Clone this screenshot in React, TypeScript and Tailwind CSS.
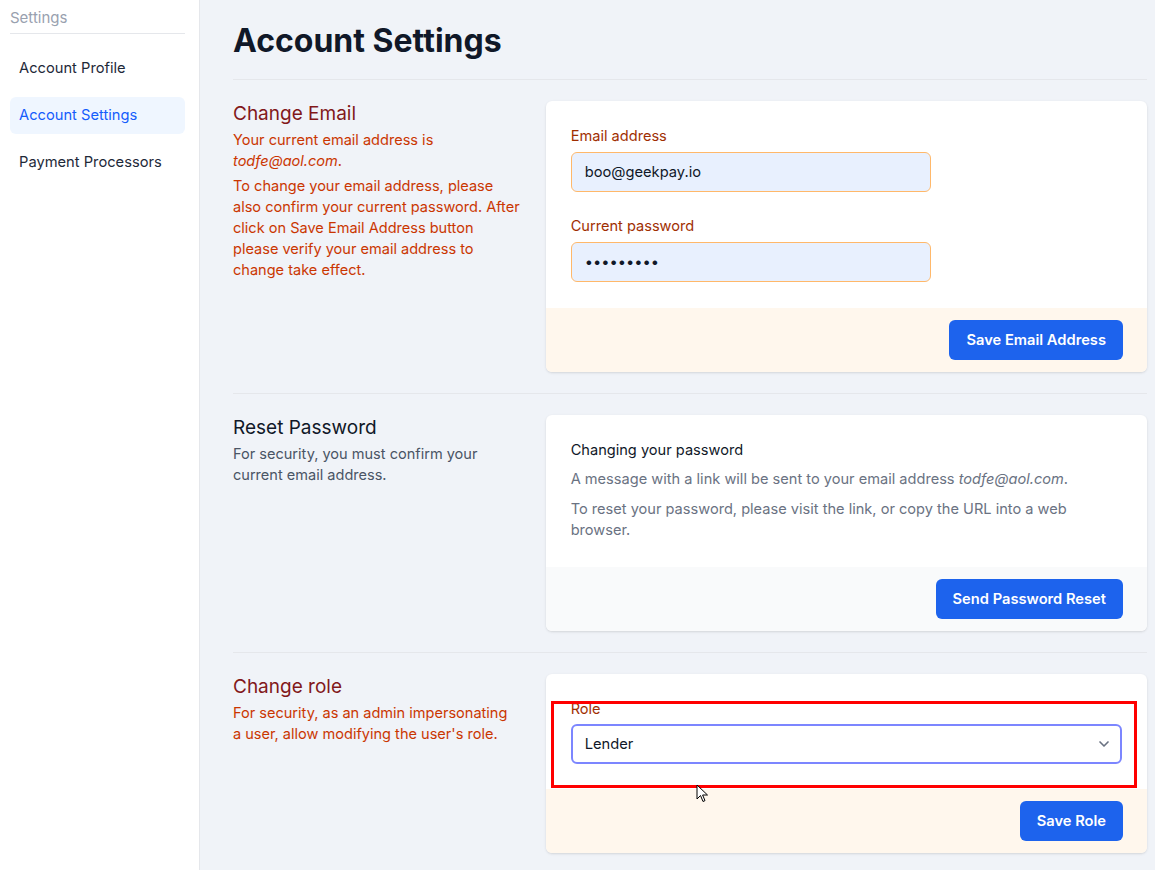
import React from 'react'
import { ChevronDown } from 'lucide-react'

// 侧边栏菜单
const NAV_ITEMS = [
  { label: 'Account Profile', active: false },
  { label: 'Account Settings', active: true },
  { label: 'Payment Processors', active: false },
]

const Sidebar: React.FC = () => (
  <aside className="w-[200px] shrink-0 bg-white border-r border-gray-200 px-[10px] pr-[14px]">
    <div className="pt-[8px] pb-[5px] border-b border-gray-200 text-[15px] leading-5 text-gray-400">Settings</div>
    <nav className="mt-[16px] flex flex-col gap-[10px]">
      {NAV_ITEMS.map((item) => (
        <a
          key={item.label}
          className={`flex h-[37px] items-center rounded-md px-[9px] text-[14.7px] ${
            item.active ? 'bg-blue-50 text-blue-600' : 'text-gray-800'
          }`}
        >
          {item.label}
        </a>
      ))}
    </nav>
  </aside>
)

const Field: React.FC<{ label: string; value: string; type?: string; className?: string }> = ({
  label,
  value,
  type = 'text',
  className = '',
}) => (
  <div className={className}>
    <label className="block text-[14.6px] leading-5 text-orange-800">{label}</label>
    <input
      readOnly
      type={type}
      value={value}
      className="mt-[6px] block w-[360px] h-10 rounded-md border border-orange-300 bg-[#e8f0fe] px-[13px] text-[14.7px] text-gray-900 outline-none"
    />
  </div>
)

const Button: React.FC<{ children: React.ReactNode }> = ({ children }) => (
  <button className="h-10 rounded-md bg-[#1d63ed] px-[17px] text-[14.7px] font-semibold text-white">
    {children}
  </button>
)

export default function App() {
  return (
    <div className="flex min-h-[870px] bg-[#f0f3f8] font-['Inter','Liberation_Sans',sans-serif]">
      <Sidebar />

      <main className="flex-1 pl-[33px] pr-2">
        <h1 className="pt-[21px] pb-[18px] border-b border-gray-200 text-[32px] leading-10 font-bold text-gray-900">
          Account Settings
        </h1>

        {/* Change Email */}
        <section className="grid grid-cols-3 gap-6 py-[21px] border-b border-gray-200">
          <div className="pt-[1px]">
            <h3 className="text-[19px] leading-6 text-red-900">Change Email</h3>
            <p className="mt-[4px] text-[14.55px] leading-[21px] text-orange-700">
              Your current email address is <em>todfe@aol.com</em>.
            </p>
            <p className="mt-1 text-[14.55px] leading-[21px] text-orange-700">
              To change your email address, please also confirm your current password. After click on Save Email
              Address button please verify your email address to change take effect.
            </p>
          </div>
          <div className="col-span-2 overflow-hidden rounded-md bg-white shadow-sm">
            <div className="px-[25px] pt-[25px] pb-[26px]">
              <Field label="Email address" value="boo@geekpay.io" />
              <Field label="Current password" value="boosecret" type="password" className="mt-6" />
            </div>
            <div className="flex justify-end bg-orange-50 px-6 py-3">
              <Button>Save Email Address</Button>
            </div>
          </div>
        </section>

        {/* Reset Password */}
        <section className="grid grid-cols-3 gap-6 py-[21px] border-b border-gray-200">
          <div className="pt-[1px]">
            <h3 className="text-[19px] leading-6 text-gray-900">Reset Password</h3>
            <p className="mt-[4px] text-[14.55px] leading-[21px] text-gray-600">
              For security, you must confirm your current email address.
            </p>
          </div>
          <div className="col-span-2 overflow-hidden rounded-md bg-white shadow-sm">
            <div className="px-[25px] pt-[25px] pb-[26px]">
              <h4 className="text-[14.6px] leading-5 text-gray-900">Changing your password</h4>
              <p className="mt-[9px] text-[14.6px] leading-5 text-gray-500">
                A message with a link will be sent to your email address <em>todfe@aol.com</em>.
              </p>
              <p className="mt-[10px] text-[14.6px] leading-[21px] text-gray-500">
                To reset your password, please visit the link, or copy the URL into a web browser.
              </p>
            </div>
            <div className="flex justify-end bg-gray-50 px-6 py-3">
              <Button>Send Password Reset</Button>
            </div>
          </div>
        </section>

        {/* Change role */}
        <section className="grid grid-cols-3 gap-6 py-[21px]">
          <div className="pt-[1px]">
            <h3 className="text-[19px] leading-6 text-red-900">Change role</h3>
            <p className="mt-[4px] pr-2 text-[14.55px] leading-[21px] text-orange-700">
              For security, as an admin impersonating a user, allow modifying the user's role.
            </p>
          </div>
          <div className="relative col-span-2 overflow-visible rounded-md bg-white shadow-sm">
            <div className="px-[25px] pt-[25px] pb-[25px]">
              <label className="block text-[14.6px] leading-5 text-orange-800">Role</label>
              <div className="relative mt-[5px]">
                <div className="flex h-10 items-center rounded-md border-2 border-indigo-400 bg-white px-[12px] text-[14.7px] text-gray-900">
                  Lender
                </div>
                <ChevronDown className="absolute right-[10px] top-[12px] h-4 w-4 text-gray-500" strokeWidth={2.5} />
              </div>
            </div>
            <div className="flex justify-end rounded-b-md bg-orange-50 px-6 py-3">
              <Button>Save Role</Button>
            </div>

            {/* 截图里的红框标注 */}
            <div className="pointer-events-none absolute left-[5px] right-[10px] top-[27px] h-[87px] border-[3px] border-[#ff0000]" />
            {/* 鼠标指针 */}
            <svg className="absolute left-[150px] top-[110px]" width="14" height="20" viewBox="0 0 14 20">
              <path d="M1 1 L1 15 L4.5 11.5 L7 17.5 L9 16.6 L6.6 11 L11.5 11 Z" fill="white" stroke="black" strokeWidth="1" strokeLinejoin="round" />
            </svg>
          </div>
        </section>
      </main>
    </div>
  )
}
